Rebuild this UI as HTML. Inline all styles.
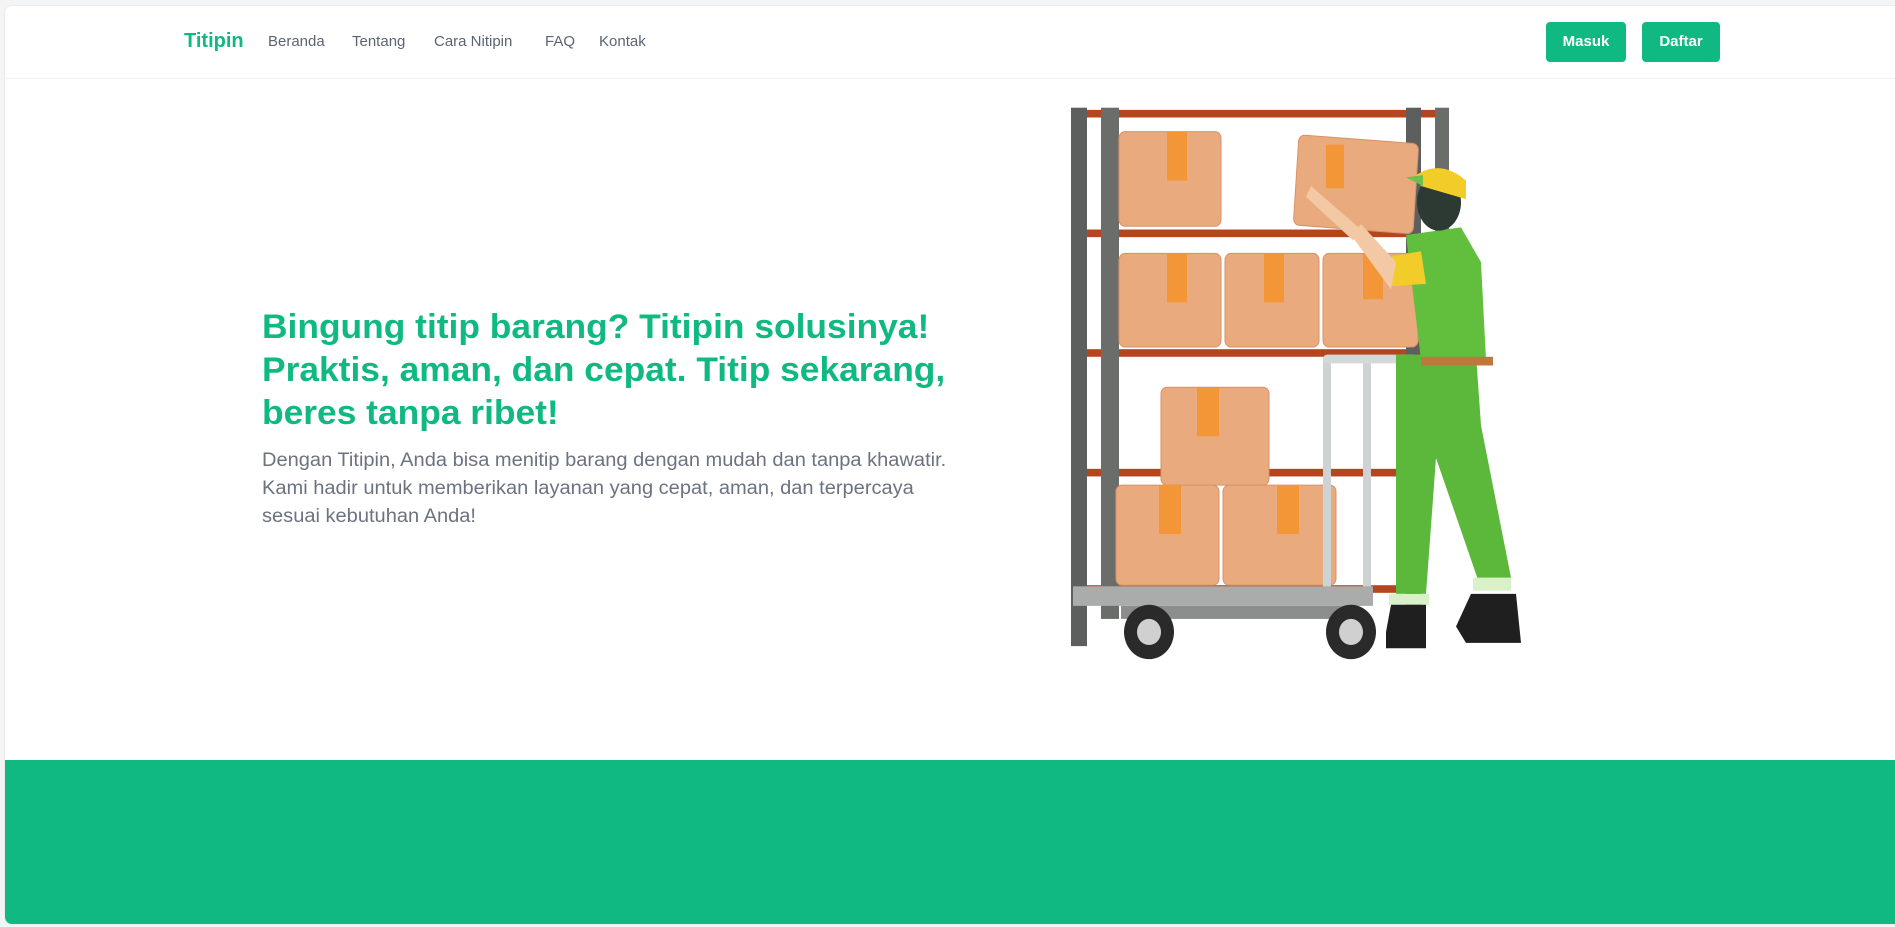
<!DOCTYPE html>
<html><head><meta charset="utf-8"><style>
*{margin:0;padding:0;box-sizing:border-box}
html,body{width:1895px;height:927px;overflow:hidden;background:#f3f4f6;font-family:"Liberation Sans",sans-serif}
.card{position:absolute;left:4px;top:5px;width:1891px;height:920px;background:#fff;border-radius:8px 0 0 8px;border:1px solid #ececec;border-right:none;overflow:hidden}
.nav{position:absolute;left:0;top:0;width:100%;height:73px;border-bottom:1px solid #f0f0f0}
.logo{position:absolute;left:179px;top:24px;font-size:20px;font-weight:bold;color:#10b981}
.links a{position:absolute;top:27px;font-size:15px;color:#5b6472;text-decoration:none}
.btn{position:absolute;top:16px;height:40px;background:#10b981;color:#fff;font-weight:bold;font-size:15px;border-radius:4px;text-align:center;line-height:40px}
h1{position:absolute;left:257px;top:300px;font-size:34px;line-height:43px;color:#10b981;font-weight:bold;white-space:nowrap;transform:scaleX(1.04);transform-origin:left top}
p{position:absolute;left:257px;top:441px;font-size:19px;line-height:28px;color:#6b7280;white-space:nowrap;transform:scaleX(1.055);transform-origin:left top}
.green{position:absolute;left:0;top:754px;width:100%;height:170px;background:#10b981}
svg{position:absolute;left:1056px;top:93px}
</style></head><body>
<div class="card">
<div class="nav">
<div class="logo">Titipin</div>
<div class="links"><a style="left:263px">Beranda</a><a style="left:347px">Tentang</a><a style="left:429px">Cara Nitipin</a><a style="left:540px">FAQ</a><a style="left:594px">Kontak</a></div>
<div class="btn" style="left:1541px;width:80px">Masuk</div>
<div class="btn" style="left:1637px;width:78px">Daftar</div>
</div>
<h1>Bingung titip barang? Titipin solusinya!<br>Praktis, aman, dan cepat. Titip sekarang,<br>beres tanpa ribet!</h1>
<p>Dengan Titipin, Anda bisa menitip barang dengan mudah dan tanpa khawatir.<br>Kami hadir untuk memberikan layanan yang cepat, aman, dan terpercaya<br>sesuai kebutuhan Anda!</p>
<svg width="480" height="620" viewBox="0 0 480 570" preserveAspectRatio="none">
<g fill="#b5451f">
<rect x="20" y="10" width="360" height="7"/><rect x="20" y="120" width="340" height="7"/><rect x="20" y="230" width="340" height="7"/><rect x="20" y="340" width="340" height="7"/><rect x="20" y="447" width="340" height="7"/>
</g>
<rect x="10" y="8" width="16" height="495" fill="#5d5f5e"/><rect x="40" y="8" width="18" height="470" fill="#6b6d6b"/>
<rect x="345" y="8" width="15" height="470" fill="#5d5f5e"/><rect x="374" y="8" width="14" height="140" fill="#6b6d6b"/>
<g fill="#e9aa7e" stroke="#d9926a" stroke-width="1">
<rect x="58" y="30" width="102" height="87" rx="6"/>
<rect x="58" y="142" width="102" height="86" rx="6"/><rect x="164" y="142" width="94" height="86" rx="6"/><rect x="262" y="142" width="95" height="86" rx="6"/>
<rect x="100" y="265" width="108" height="90" rx="6"/>
<rect x="55" y="355" width="103" height="92" rx="6"/><rect x="162" y="355" width="113" height="92" rx="6"/>
<rect x="235" y="37" width="120" height="83" rx="6" transform="rotate(4 295 78)"/>
</g>
<g fill="#f39638">
<rect x="106" y="30" width="20" height="45"/><rect x="106" y="142" width="20" height="45"/><rect x="203" y="142" width="20" height="45"/><rect x="302" y="142" width="20" height="42"/>
<rect x="136" y="265" width="22" height="45"/><rect x="98" y="355" width="22" height="45"/><rect x="216" y="355" width="22" height="45"/><rect x="265" y="42" width="18" height="40"/>
</g>
<rect x="262" y="237" width="8" height="225" fill="#cfd2d2"/><rect x="302" y="237" width="8" height="225" fill="#cfd2d2"/>
<rect x="262" y="235" width="95" height="8" rx="4" fill="#d5d8d8"/>
<rect x="12" y="448" width="300" height="18" fill="#a9acab"/><rect x="60" y="466" width="230" height="12" fill="#8b8e8d"/>
<circle cx="88" cy="490" r="25" fill="#2a2a2a"/><circle cx="88" cy="490" r="12" fill="#cfd0cf"/>
<circle cx="290" cy="490" r="25" fill="#2a2a2a"/><circle cx="290" cy="490" r="12" fill="#cfd0cf"/>
<path d="M335 235 L415 235 L420 300 L450 440 L420 450 L375 330 L365 455 L335 455 Z" fill="#5cb83a"/>
<path d="M345 125 L400 118 L420 150 L425 240 L360 240 Z" fill="#62bf3e"/>
<rect x="360" y="237" width="72" height="8" fill="#c0773c"/>
<path d="M330 145 L360 140 L365 170 L330 172 Z" fill="#f2cd2a"/>
<path d="M300 115 L335 150 L330 175 L290 125 Z" fill="#f2c9a4"/>
<path d="M250 80 L300 120 L292 130 L245 90 Z" fill="#f2c9a4"/>
<ellipse cx="378" cy="95" rx="22" ry="26" fill="#2d3a33"/>
<path d="M355 70 Q380 55 405 75 L405 92 L360 80 Z" fill="#f2cd2a"/><path d="M345 72 L362 70 L362 80 Z" fill="#6fbf4a"/>
<rect x="328" y="455" width="40" height="10" fill="#d9f0c9"/><rect x="412" y="440" width="38" height="12" fill="#d9f0c9"/>
<path d="M330 465 L365 465 L365 505 L325 505 L325 490 Z" fill="#1f1f1f"/><path d="M410 455 L455 455 L460 500 L405 500 L395 485 Z" fill="#1f1f1f"/>
</svg>
<div class="green"></div>
</div>
</body></html>
